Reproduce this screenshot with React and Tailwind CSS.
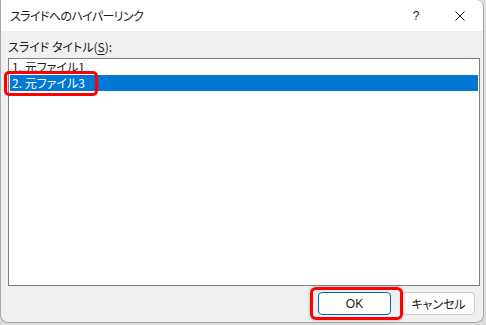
import { useState } from "react";

const items = ["1. 元ファイル1", "2. 元ファイル3"];

const jp = "font-['Meiryo_UI','Noto_Sans_CJK_JP',sans-serif] [font-feature-settings:'palt']";

export default function App() {
  const [selected, setSelected] = useState(1);

  return (
    <div className="w-[486px] h-[325px] bg-[#dcdcdc] overflow-hidden relative">
      {/* Dialog */}
      <div className={`w-[484px] h-[323px] bg-[#f0f0f0] border-l border-r border-b border-[#a8a8a8] rounded-tr-[8px] rounded-b-[8px] flex flex-col overflow-hidden text-[#1a1a1a] ${jp}`}>
        {/* Title bar */}
        <div className="h-[31px] bg-white flex items-center shrink-0">
          <span className="pl-[9px] text-[12px] leading-none tracking-[-0.6px]">スライドへのハイパーリンク</span>
          <span className="ml-auto w-[12px] text-center text-[12px] font-['Liberation_Sans',sans-serif] leading-none mr-[33px]">?</span>
          <svg width="10" height="10" viewBox="0 0 10 10" className="mr-[18px]">
            <path d="M0.5 0.5L9.5 9.5M9.5 0.5L0.5 9.5" stroke="#1a1a1a" strokeWidth="1" />
          </svg>
        </div>

        {/* Body */}
        <div className="flex flex-col px-[7px] pt-[8px] flex-1">
          <div className="h-[16px] text-[12px] leading-[16px]">
            スライド タイトル(<span className="underline underline-offset-2">S</span>):
          </div>
          <div className="mt-[3px] h-[228px] w-[472px] bg-white border border-[#7f7f7f] px-[1px]">
            {items.map((t, i) => (
              <div
                key={t}
                onClick={() => setSelected(i)}
                className={`h-[16px] pl-[2px] text-[12px] leading-[16px] overflow-hidden cursor-default ${
                  selected === i ? "bg-[#0078d4] text-white" : "text-[#1a1a1a]"
                }`}
              >
                {t}
              </div>
            ))}
          </div>

          {/* Buttons */}
          <div className="flex justify-end gap-[11px] mt-[6px] pr-[1px]">
            <button className="w-[73px] h-[23px] bg-white border border-[#0067c0] rounded-[4px] text-[12px] font-['Liberation_Sans',sans-serif]">
              OK
            </button>
            <button className="w-[73px] h-[23px] bg-[#fdfdfd] border border-[#cccccc] rounded-[4px] text-[12px]">
              キャンセル
            </button>
          </div>
        </div>
      </div>

      {/* Red highlight markers */}
      <div className="absolute left-[4px] top-[71px] w-[94px] h-[25px] border-[3px] border-[#ff0000] rounded-[5px]" />
      <div className="absolute left-[310px] top-[287px] w-[93px] h-[33px] border-[3px] border-[#ff0000] rounded-[6px] shadow-[0_0_3px_rgba(0,0,0,0.35)]" />
    </div>
  );
}
